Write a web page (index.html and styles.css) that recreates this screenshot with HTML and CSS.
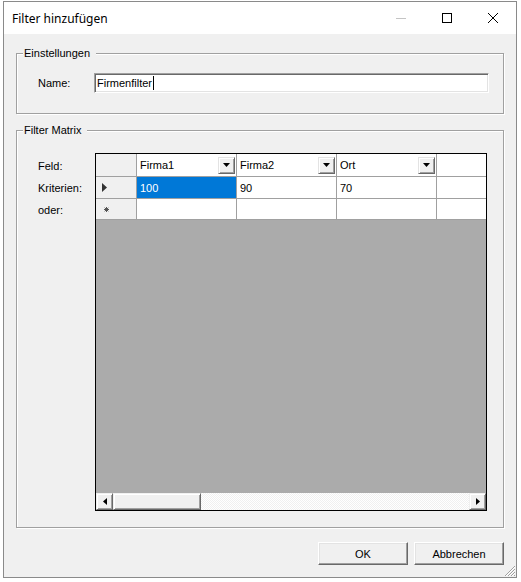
FILE: index.html
```html
<!DOCTYPE html>
<html lang="de">
<head>
<meta charset="utf-8">
<title>Filter hinzufügen</title>
<link rel="stylesheet" href="styles.css">
</head>
<body>
<div class="window">
  <div class="titlebar">
    <div class="title">Filter hinzufügen</div>
    <div class="cap"><svg width="10" height="10" viewBox="0 0 10 10"><line x1="0" y1="5.5" x2="10" y2="5.5" stroke="#c4c4c4" stroke-width="1"/></svg></div>
    <div class="cap"><svg width="10" height="10" viewBox="0 0 10 10"><rect x="0.5" y="0.5" width="9" height="9" fill="none" stroke="#000" stroke-width="1"/></svg></div>
    <div class="cap"><svg width="10" height="10" viewBox="0 0 10 10"><path d="M0 0L10 10M10 0L0 10" stroke="#000" stroke-width="1"/></svg></div>
  </div>
  <div class="content">
    <div class="group g1">
      <span class="legend">Einstellungen</span>
      <div class="name-row">
        <span class="name-label">Name:</span>
        <div class="textbox"><span>Firmenfilter</span><span class="caret"></span></div>
      </div>
    </div>
    <div class="group g2">
      <span class="legend">Filter Matrix</span>
      <div class="matrix">
        <div class="labels">
          <div class="lbl l0">Feld:</div>
          <div class="lbl l1">Kriterien:</div>
          <div class="lbl l2">oder:</div>
        </div>
        <div class="dg">
          <div class="cells">
            <div class="rh"></div>
            <div class="cell hcell"><span>Firma1</span><span class="ddbtn"><svg width="7" height="4" viewBox="0 0 7 4"><path d="M0 0H7L3.5 4Z" fill="#000"/></svg></span></div>
            <div class="cell hcell"><span>Firma2</span><span class="ddbtn"><svg width="7" height="4" viewBox="0 0 7 4"><path d="M0 0H7L3.5 4Z" fill="#000"/></svg></span></div>
            <div class="cell hcell"><span>Ort</span><span class="ddbtn"><svg width="7" height="4" viewBox="0 0 7 4"><path d="M0 0H7L3.5 4Z" fill="#000"/></svg></span></div>
            <div class="cell"></div>

            <div class="rh"><svg width="5" height="9" viewBox="0 0 5 9"><path d="M0 0L5 4.5L0 9Z" fill="#333"/></svg></div>
            <div class="cell sel">100</div>
            <div class="cell">90</div>
            <div class="cell">70</div>
            <div class="cell"></div>

            <div class="rh star"><svg width="5" height="5" viewBox="0 0 5 5"><path d="M2.5 0V5M0 2.5H5M0.7 0.7L4.3 4.3M4.3 0.7L0.7 4.3" stroke="#555" stroke-width="1"/></svg></div>
            <div class="cell"></div>
            <div class="cell"></div>
            <div class="cell"></div>
            <div class="cell"></div>
          </div>
          <div class="filler"></div>
          <div class="hscroll">
            <div class="sbtn"><svg width="4" height="7" viewBox="0 0 4 7"><path d="M4 0V7L0 3.5Z" fill="#000"/></svg></div>
            <div class="thumb"></div>
            <div class="track"></div>
            <div class="sbtn"><svg width="4" height="7" viewBox="0 0 4 7"><path d="M0 0V7L4 3.5Z" fill="#000"/></svg></div>
          </div>
        </div>
      </div>
    </div>
    <div class="buttons">
      <div class="btn">OK</div>
      <div class="btn">Abbrechen</div>
    </div>
    <div class="grip-row">
      <svg class="grip" width="12" height="12" viewBox="0 0 12 12">
        <path d="M11 1L1 11M11 4L4 11M11 7L7 11M11 10L10 11" stroke="#a0a0a0" stroke-width="1"/>
        <path d="M11 2L2 11M11 5L5 11M11 8L8 11" stroke="#fff" stroke-width="1"/>
      </svg>
    </div>
  </div>
</div>
</body>
</html>
```

FILE: styles.css
```css
html, body {
  margin: 0;
  padding: 0;
  background: #ffffff;
}
body {
  font-family: "Liberation Sans", Arial, sans-serif;
  font-size: 11px;
  color: #000;
}
.window {
  margin: 1px 0 0 3px;
  width: 514px;
  height: 577px;
  box-sizing: border-box;
  border: 1px solid #8a8a8a;
  background: #f0f0f0;
  display: flex;
  flex-direction: column;
}
.titlebar {
  height: 32px;
  flex: none;
  background: #fff;
  display: flex;
  align-items: center;
}
.title {
  flex: 1;
  padding-left: 8px;
  font-family: "Noto Sans", "Liberation Sans", sans-serif;
  font-size: 12px;
  color: #000;
}
.cap {
  width: 46px;
  height: 32px;
  display: flex;
  align-items: center;
  justify-content: center;
}
.cap svg { display: block; }
.content {
  flex: 1;
  padding: 0 12px;
  display: flex;
  flex-direction: column;
}
.group {
  box-sizing: border-box;
  border: 1px solid #a0a0a0;
  box-shadow: inset 1px 1px 0 #fff, 1px 1px 0 #fff;
}
.g1 {
  margin-top: 19px;
  height: 61px;
}
.g2 {
  margin-top: 16px;
  height: 398px;
}
.legend {
  display: block;
  width: max-content;
  margin: -7px 0 0 6px;
  padding: 0 6px 0 1px;
  background: #f0f0f0;
  line-height: 13px;
  height: 13px;
}
.name-row {
  display: flex;
  align-items: center;
  margin-top: 13px;
  padding-left: 21px;
}
.name-label {
  width: 56px;
}
.textbox {
  width: 395px;
  height: 20px;
  box-sizing: border-box;
  background: #fff;
  border: 1px solid;
  border-color: #a0a0a0 #fff #fff #a0a0a0;
  box-shadow: inset 1px 1px 0 #696969, inset -1px -1px 0 #e3e3e3;
  display: flex;
  align-items: center;
  padding-left: 2px;
}
.caret {
  width: 1px;
  height: 14px;
  background: #000;
  margin-left: 1px;
}
.matrix {
  display: flex;
  margin-top: 16px;
  padding-left: 21px;
}
.labels {
  width: 57px;
  padding-top: 1px;
}
.lbl { display: flex; align-items: center; }
.l0 { height: 23px; }
.l1 { height: 22px; }
.l2 { height: 21px; }
.dg {
  width: 392px;
  height: 358px;
  box-sizing: border-box;
  border: 1px solid #000;
  background: #ababab;
  display: flex;
  flex-direction: column;
}
.cells {
  display: grid;
  grid-template-columns: 40px 99px 99px 99px 49px;
  grid-template-rows: 22px 21px 20px;
  gap: 1px;
  padding-bottom: 1px;
  background: #a0a0a0;
}
.rh {
  background: #f0f0f0;
  display: flex;
  align-items: center;
  padding-left: 6px;
}
.rh.star { padding-left: 8px; }
.rh svg { display: block; }
.cell {
  background: #fff;
  display: flex;
  align-items: center;
  padding-left: 3px;
  color: #000;
}
.hcell {
  justify-content: space-between;
  padding-right: 1px;
}
.sel {
  background: #0078d7;
  color: #fff;
}
.ddbtn {
  width: 17px;
  height: 17px;
  box-sizing: border-box;
  background: #f0f0f0;
  border: 1px solid;
  border-color: #e3e3e3 #696969 #696969 #e3e3e3;
  box-shadow: inset 1px 1px 0 #fff, inset -1px -1px 0 #a0a0a0;
  display: flex;
  align-items: center;
  justify-content: center;
}
.ddbtn svg { display: block; }
.filler { flex: 1; }
.hscroll {
  height: 17px;
  display: flex;
}
.sbtn {
  width: 17px;
  height: 17px;
  box-sizing: border-box;
  background: #f0f0f0;
  border: 1px solid;
  border-color: #f0f0f0 #696969 #696969 #f0f0f0;
  box-shadow: inset 1px 1px 0 #fff, inset -1px -1px 0 #a0a0a0;
  display: flex;
  align-items: center;
  justify-content: center;
}
.sbtn svg { display: block; }
.thumb {
  width: 88px;
  height: 17px;
  box-sizing: border-box;
  background: #f0f0f0;
  border: 1px solid;
  border-color: #f0f0f0 #696969 #696969 #f0f0f0;
  box-shadow: inset 1px 1px 0 #fff, inset -1px -1px 0 #a0a0a0;
}
.track {
  flex: 1;
  background: repeating-conic-gradient(#ffffff 0 25%, #f0f0f0 0 50%) 0 0 / 2px 2px;
}
.buttons {
  margin-top: 14px;
  display: flex;
  justify-content: flex-end;
  gap: 6px;
}
.btn {
  width: 90px;
  height: 23px;
  box-sizing: border-box;
  background: #f0f0f0;
  border: 1px solid;
  border-color: #fff #696969 #696969 #fff;
  box-shadow: inset -1px -1px 0 #a0a0a0, inset 1px 1px 0 #e3e3e3;
  display: flex;
  align-items: center;
  justify-content: center;
}
.grip-row {
  height: 12px;
  display: flex;
  justify-content: flex-end;
  margin-right: -12px;
}
.grip { display: block; }
```
